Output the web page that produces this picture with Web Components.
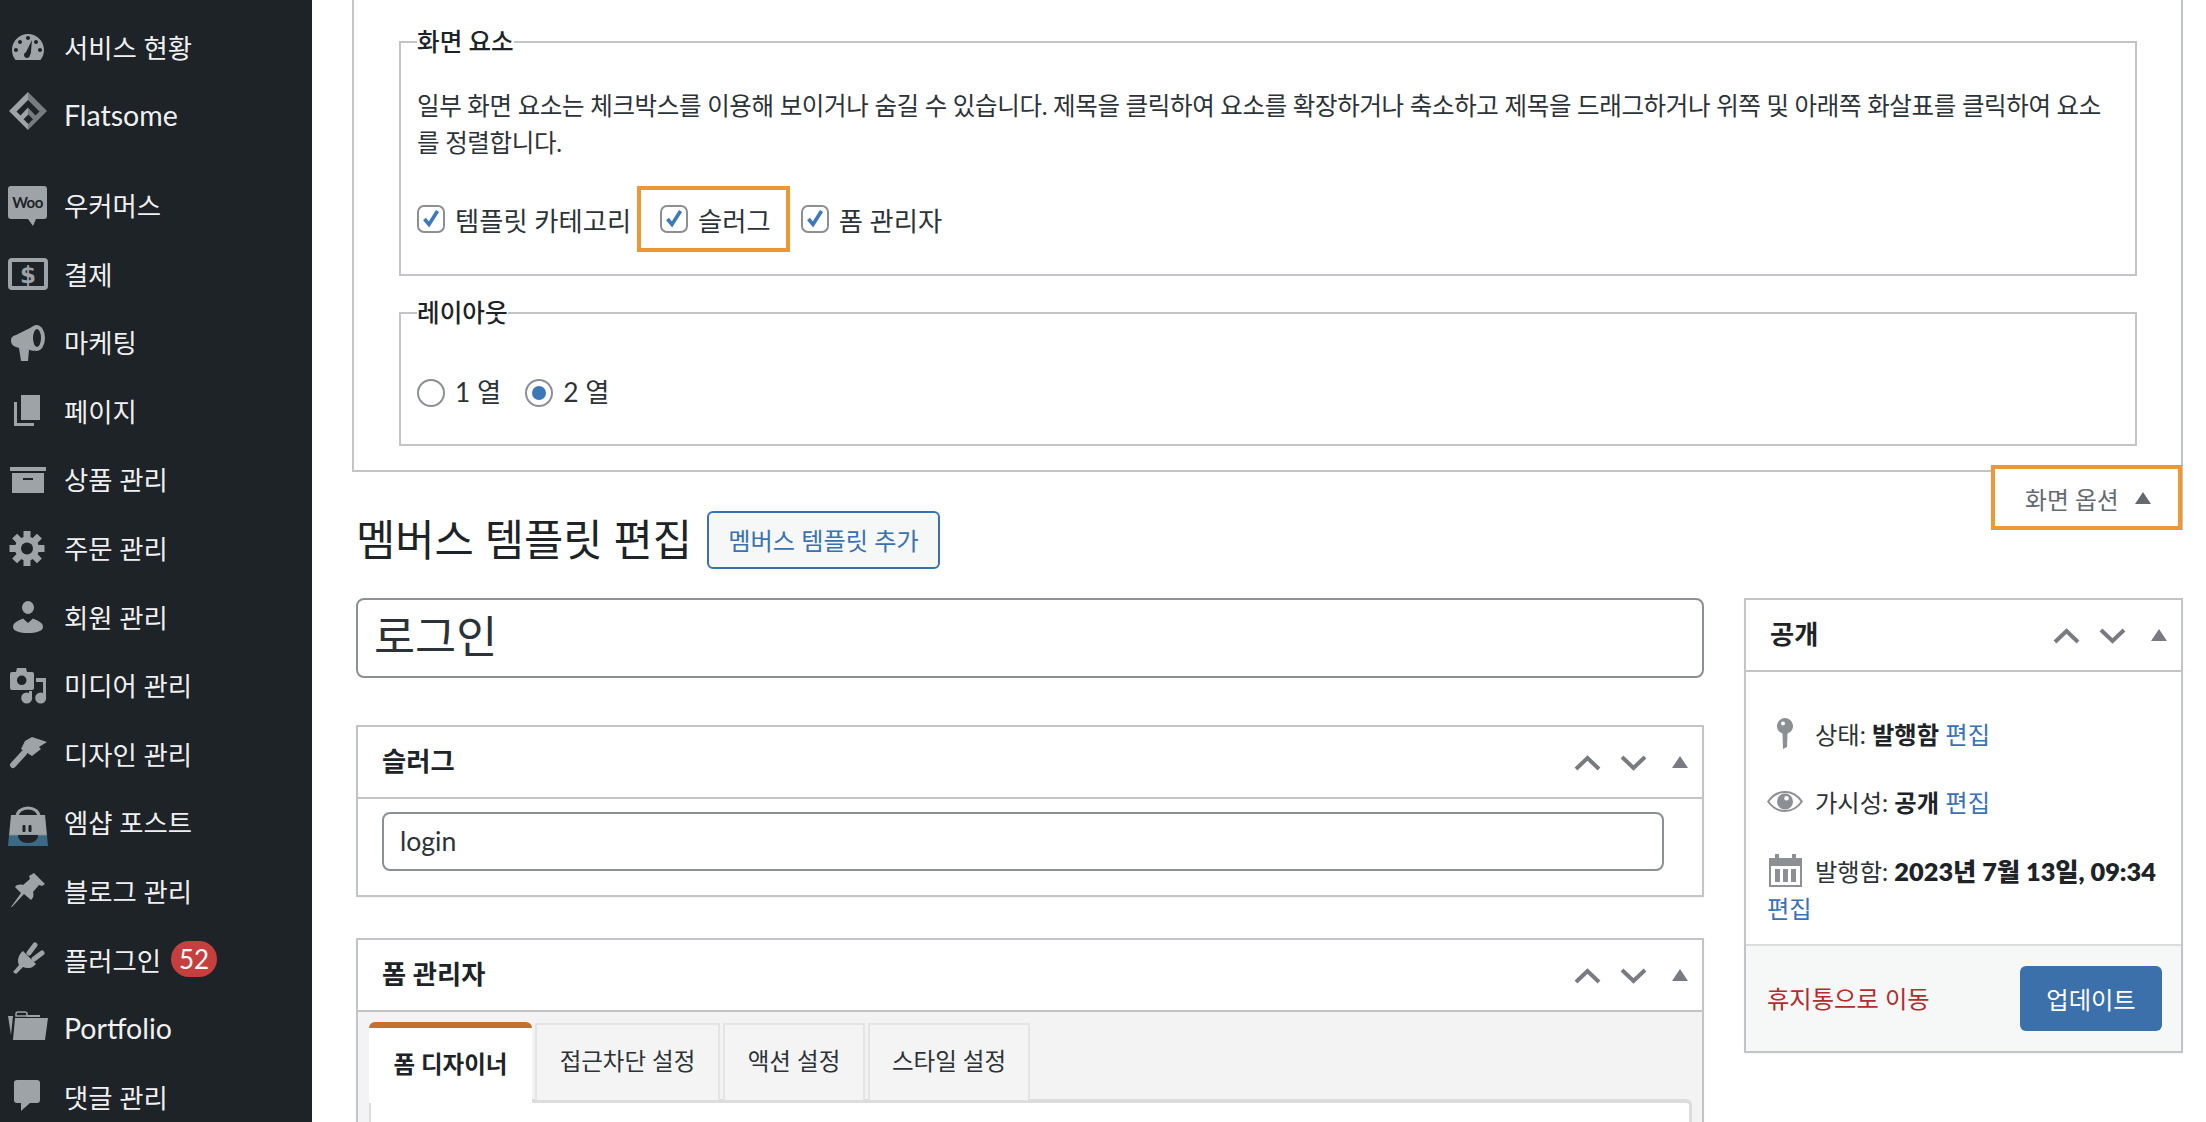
<!DOCTYPE html>
<html lang="ko">
<head>
<meta charset="utf-8">
<title>멤버스 템플릿 편집</title>
<style>
  html, body { margin: 0; height: 1122px; overflow: hidden; background: #fff; }
  body { display: flex; font-family: Lato, "Noto Sans CJK KR", sans-serif; color: #1d2327; }
</style>
</head>
<body>
<wp-sidebar>
  <wp-menu-item icon="dashboard">서비스 현황</wp-menu-item>
  <wp-menu-item icon="flatsome" latin>Flatsome</wp-menu-item>
  <wp-menu-item icon="woo" sep>우커머스</wp-menu-item>
  <wp-menu-item icon="payment">결제</wp-menu-item>
  <wp-menu-item icon="megaphone">마케팅</wp-menu-item>
  <wp-menu-item icon="pages">페이지</wp-menu-item>
  <wp-menu-item icon="archive">상품 관리</wp-menu-item>
  <wp-menu-item icon="gear">주문 관리</wp-menu-item>
  <wp-menu-item icon="user">회원 관리</wp-menu-item>
  <wp-menu-item icon="media">미디어 관리</wp-menu-item>
  <wp-menu-item icon="brush">디자인 관리</wp-menu-item>
  <wp-menu-item icon="mshop">엠샵 포스트</wp-menu-item>
  <wp-menu-item icon="pin">블로그 관리</wp-menu-item>
  <wp-menu-item icon="plugin" badge="52">플러그인</wp-menu-item>
  <wp-menu-item icon="folder" latin>Portfolio</wp-menu-item>
  <wp-menu-item icon="comment">댓글 관리</wp-menu-item>
</wp-sidebar>
<wp-main>
  <wp-screen-panel></wp-screen-panel>
  <wp-screen-tab></wp-screen-tab>
  <wp-title-row></wp-title-row>
  <wp-editor>
    <wp-title-input slot="left">로그인</wp-title-input>
    <wp-postbox slot="left" heading="슬러그" class="slug"><wp-slug-field>login</wp-slug-field></wp-postbox>
    <wp-postbox slot="left" heading="폼 관리자" class="form"><wp-tabs></wp-tabs></wp-postbox>
    <wp-postbox slot="right" heading="공개"><wp-publish></wp-publish></wp-postbox>
  </wp-editor>
</wp-main>

<script>
const ICONS = {
  dashboard: `<path transform="translate(0 2) scale(2)" fill-rule="evenodd" d="M3.76 16h12.48C17.33 14.63 18 12.9 18 11c0-4.42-3.58-8-8-8s-8 3.58-8 8c0 1.9.67 3.63 1.76 5zM10 4c.55 0 1 .45 1 1s-.45 1-1 1-1-.45-1-1 .45-1 1-1zM6 6c.55 0 1 .45 1 1s-.45 1-1 1-1-.45-1-1 .45-1 1-1zm8 0c.55 0 1 .45 1 1s-.45 1-1 1-1-.45-1-1 .45-1 1-1zM4 10c.55 0 1 .45 1 1s-.45 1-1 1-1-.45-1-1 .45-1 1-1zm12 0c.55 0 1 .45 1 1s-.45 1-1 1-1-.45-1-1 .45-1 1-1zm-5 3.5c0 .83-.67 1.5-1.5 1.5S8 14.33 8 13.5c0-.64.4-1.19.97-1.4L12 6l-.6 6.7c-.26.3-.4.6-.4.8z"/>`,
  flatsome: `<path d="M20-3 1 16l19 19z"/><path d="M20-3l19 19-19 19z" fill="#787c80"/>
    <path d="M20 5 8.5 16.5l4 4L20 12.6l7.500 7.900 4-4z" fill="#1d2327"/><path d="M20.300 19.600l4.700 4.700-4.700 4.700-4.700-4.700z" fill="#1d2327"/>`,
  woo: `<path d="M3 2h33a3 3 0 0 1 3 3v27a3 3 0 0 1-3 3H28l-3 7-5-7H3a3 3 0 0 1-3-3V5a3 3 0 0 1 3-3z"/>
    <text x="19.500" y="24" text-anchor="middle" font-family="Lato, sans-serif" font-weight="700" font-size="15" letter-spacing="-0.5" fill="#1d2327">Woo</text>`,
  payment: `<rect x="2" y="7" width="36" height="28" rx="2" fill="none" stroke="currentColor" stroke-width="4"/>
    <text x="20" y="29.500" text-anchor="middle" font-family="'DejaVu Sans', sans-serif" font-weight="700" font-size="23" fill="currentColor">$</text>`,
  megaphone: `<path d="M3 18c0-3 2-4 5-5L26 4v25l-9-2 4 1-1 11h-7l-2-13-3-1c-3-1-5-3-5-7z"/><ellipse cx="28.500" cy="16" rx="8.500" ry="13"/><ellipse cx="29" cy="16" rx="4" ry="9" fill="#1d2327"/>`,
  pages: `<path d="M13 5h19v25H13z"/><path d="M6 12h3v21h17v3H6z"/>`,
  archive: `<path d="M2 8h36v4H2z"/><path fill-rule="evenodd" d="M4 14h32v20H4zM15 19v2h10v-2z"/>`,
  gear: `<g stroke="currentColor" stroke-width="7"><path d="M19 4v35M1.500 21.500h35M6.600 9.100l24.800 24.800M31.400 9.100 6.600 33.900"/></g><circle cx="19" cy="21.500" r="12"/><circle cx="19" cy="21.500" r="6" fill="#1d2327"/>`,
  user: `<ellipse cx="20" cy="11.500" rx="6" ry="6.500"/><path d="M5 31c0-5 6-6.500 10-8.500l5 4.500 5-4.500c4 2 10 3.500 10 8.500 0 4-7 6-15 6S5 35 5 31z"/>`,
  media: `<path fill-rule="evenodd" d="M8 7l1-4h9l1 4h5a2 2 0 0 1 2 2v14a2 2 0 0 1-2 2H4a2 2 0 0 1-2-2V9a2 2 0 0 1 2-2zm5.700 3.500a4.800 4.800 0 1 0 0 9.600 4.800 4.800 0 0 0 0-9.600z"/>
    <path d="M28 13h10v20h-3V17h-7z"/><circle cx="32.700" cy="33" r="5.500"/><path d="M21 26h3v7h-3z"/><circle cx="18.700" cy="33" r="5.500"/>`,
  brush: `<path d="M17 8l7-4 15 5-8 5 2 2-9 7-11-7z"/><path d="M16 20 5 32" stroke="currentColor" stroke-width="6" stroke-linecap="round"/>`,
  mshop: `<defs><linearGradient id="ms" x1="0" y1="0" x2="0" y2="1"><stop offset=".62" stop-color="#9ea3a8"/><stop offset=".68" stop-color="#3c6a85"/></linearGradient></defs>
    <path d="M9 15c0-12 22-12 22 0" fill="none" stroke="#9ea3a8" stroke-width="3"/>
    <path d="M3 13h34l3 31H0z" fill="url(#ms)"/>
    <path d="M10 33h20c0 5-4 8-10 8s-10-3-10-8z" fill="#1d2327"/>
    <rect x="14.500" y="23" width="3" height="7" rx="1" fill="#1d2327"/><rect x="20.500" y="23" width="3" height="7" rx="1" fill="#1d2327"/>`,
  pin: `<path d="M26 3l11 11-3 2-3-1-6 7c1 3 .5 6-2 8l-7-6L4 37l-1 0 10-14-6-6c2-2.500 5-3 8-2l7-6-1-3z"/>`,
  plugin: `<path d="M15 12l13 13c-3.500 4.500-9 5-13 3l-7 7-3-2 6-7c-2-4-1-10 4-14z"/><path d="M21 14l6-8M26 20l8-6" stroke="currentColor" stroke-width="5" stroke-linecap="round"/>`,
  folder: `<path d="M7 10h33l-3 22H5z"/><path d="M8 8V6q0-2 2-2h7q2 0 2 2v2z" fill="none" stroke="currentColor" stroke-width="1.500"/><path d="M0 8h5L3 27z"/><path d="M19 7h13v2H19z"/>`,
  comment: `<path d="M9 4h20a3 3 0 0 1 3 3v17a3 3 0 0 1-3 3h-7l-9 8v-8H9a3 3 0 0 1-3-3V7a3 3 0 0 1 3-3z"/>`
};

class WpSidebar extends HTMLElement {
  constructor() {
    super();
    this.attachShadow({ mode: "open" }).innerHTML = `
      <style>
        :host { display: flex; flex-direction: column; flex: none; width: 312px; height: 1122px;
          padding-top: 12px; box-sizing: border-box; background: #1d2327; overflow: hidden; }
      </style>
      <slot></slot>`;
  }
}

class WpMenuItem extends HTMLElement {
  connectedCallback() {
    const badge = this.getAttribute("badge");
    this.attachShadow({ mode: "open" }).innerHTML = `
      <style>
        :host { display: flex; align-items: center; flex: none; height: 68.6px; color: #f0f0f1;
          font-size: 26.400px; white-space: nowrap; }
        :host([latin]) { font-size: 28.500px; }
        :host([sep]) { margin-top: 21px; }
        svg { width: 40px; height: 40px; margin: 0 16px 0 8px; flex: none; overflow: visible; fill: #9ea3a8; color: #9ea3a8; }
        b { font-weight: 400; font-size: 26px; margin-left: 10px; min-width: 46px; height: 36px; line-height: 36px; border-radius: 18px;
          background: #c63f3f; color: #fff; text-align: center; box-sizing: border-box; }
      </style>
      <svg viewBox="0 0 40 40">${ICONS[this.getAttribute("icon")]}</svg>
      <slot></slot>${badge ? `<b>${badge}</b>` : ""}`;
  }
}

class WpMain extends HTMLElement {
  constructor() {
    super();
    this.attachShadow({ mode: "open" }).innerHTML = `
      <style>
        :host { display: flex; flex-direction: column; flex: 1; min-width: 0; padding: 0 23px 0 40px; }
        ::slotted(*) { flex: none; }
      </style>
      <slot></slot>`;
  }
}

class WpFieldset extends HTMLElement {
  connectedCallback() {
    this.attachShadow({ mode: "open" }).innerHTML = `
      <style>
        :host { display: block; }
        fieldset { margin: 0; padding: 0 16px; border: 2px solid #c3c4c7; min-width: 0; }
        legend { padding: 0; margin: 0; line-height: 34px; font-size: 24.600px; font-weight: 500; color: #1d2327; }
      </style>
      <fieldset><legend>${this.getAttribute("legend")}</legend><slot></slot></fieldset>`;
  }
}

class WpCheck extends HTMLElement {
  constructor() {
    super();
    this.attachShadow({ mode: "open" }).innerHTML = `
      <style>
        :host { display: inline-flex; align-items: center; gap: 10px; height: 66px; box-sizing: border-box;
          font-size: 26.300px; color: #2c3338; white-space: nowrap; }
        :host([highlight]) { border: 4px solid #ee9735; padding: 0 15px 0 19px; }
        i { flex: none; width: 28px; height: 28px; box-sizing: border-box; border: 2px solid #8c8f94; border-radius: 7px; background: #fff; display: flex; }
        svg { width: 24px; height: 24px; }
      </style>
      <i><svg viewBox="0 0 24 24"><path d="M5.500 12l4.500 5.500L18.500 4" fill="none" stroke="#3c7abb" stroke-width="3.600"/></svg></i>
      <slot></slot>`;
  }
}

class WpRadio extends HTMLElement {
  constructor() {
    super();
    this.attachShadow({ mode: "open" }).innerHTML = `
      <style>
        :host { display: inline-flex; align-items: center; gap: 10px; height: 34px; font-size: 26.300px; color: #2c3338; white-space: nowrap; }
        span { margin-top: -5px; }
        i { flex: none; width: 28px; height: 28px; box-sizing: border-box; border: 2px solid #8c8f94; border-radius: 50%; background: #fff; display: flex; align-items: center; justify-content: center; }
        :host([checked]) i::after { content: ""; width: 14px; height: 14px; border-radius: 50%; background: #3c78b8; }
      </style>
      <i></i><span><slot></slot></span>`;
  }
}

class WpScreenPanel extends HTMLElement {
  constructor() {
    super();
    this.attachShadow({ mode: "open" }).innerHTML = `
      <style>
        :host { display: block; border: solid #c3c4c7; border-width: 0 2px 2px; padding: 25px 44px 24px 45px; }
        p { margin: 28px 0 25px; max-width: 1695px; font-size: 24.500px; line-height: 37px; color: #2c3338; letter-spacing: -0.34px; word-break: break-all; }
        .checks { display: flex; align-items: center; padding-bottom: 22px; }
        .checks wp-check:nth-child(1) { margin-right: 6px; }
        .checks wp-check:nth-child(2) { margin-right: 11px; }
        wp-fieldset + wp-fieldset { margin-top: 20px; }
        .radios { display: flex; gap: 24px; padding: 46px 0 34px; }
      </style>
      <wp-fieldset legend="화면 요소">
        <p>일부 화면 요소는 체크박스를 이용해 보이거나 숨길 수 있습니다. 제목을 클릭하여 요소를 확장하거나 축소하고 제목을 드래그하거나 위쪽 및 아래쪽 화살표를 클릭하여 요소를 정렬합니다.</p>
        <div class="checks">
          <wp-check>템플릿 카테고리</wp-check>
          <wp-check highlight>슬러그</wp-check>
          <wp-check>폼 관리자</wp-check>
        </div>
      </wp-fieldset>
      <wp-fieldset legend="레이아웃">
        <div class="radios">
          <wp-radio>1 열</wp-radio>
          <wp-radio checked>2 열</wp-radio>
        </div>
      </wp-fieldset>`;
  }
}

class WpScreenTab extends HTMLElement {
  constructor() {
    super();
    this.attachShadow({ mode: "open" }).innerHTML = `
      <style>
        :host { display: flex; align-items: center; align-self: flex-end; position: relative; box-sizing: border-box;
          width: 191px; height: 65px; margin: -7px 1px -19px 0; padding-left: 30px; border: 4px solid #ee9735; background: #fff;
          font-size: 23.800px; color: #646970; white-space: nowrap; box-shadow: 1px 0 0 #c3c4c7; }
        span { margin-top: 2px; }
        i { margin-left: 16px; width: 0; height: 0; border: 8px solid transparent; border-top: 0; border-bottom: 12px solid #646970; }
      </style>
      <span>화면 옵션</span><i></i>`;
  }
}

class WpTitleRow extends HTMLElement {
  constructor() {
    super();
    this.attachShadow({ mode: "open" }).innerHTML = `
      <style>
        :host { display: flex; align-items: center; gap: 15px; height: 58px; padding-left: 4px; }
        h1 { margin: 0 0 7px; font-size: 42.700px; font-weight: 400; color: #1d2327; white-space: nowrap; }
        a { display: flex; align-items: center; justify-content: center; box-sizing: border-box; width: 233px; height: 58px; padding-bottom: 2px;
          border: 2px solid #3a72ad; border-radius: 6px; background: #f6f7f7; color: #3a72ad; font-size: 24.200px; white-space: nowrap; }
      </style>
      <h1>멤버스 템플릿 편집</h1><a>멤버스 템플릿 추가</a>`;
  }
}

class WpEditor extends HTMLElement {
  constructor() {
    super();
    this.attachShadow({ mode: "open" }).innerHTML = `
      <style>
        :host { display: grid; grid-template-columns: 1fr 439px; gap: 40px; margin: 29px 0 0 4px; align-items: start; }
        div { display: flex; flex-direction: column; min-width: 0; }
        ::slotted(.slug) { margin-top: 47px; }
        ::slotted(.form) { margin-top: 41px; }
      </style>
      <div><slot name="left"></slot></div>
      <div><slot name="right"></slot></div>`;
  }
}

class WpTitleInput extends HTMLElement {
  constructor() {
    super();
    this.attachShadow({ mode: "open" }).innerHTML = `
      <style>
        :host { display: flex; align-items: center; box-sizing: border-box; height: 80px; padding: 0 16px 10px;
          border: 2px solid #8c8f94; border-radius: 8px; background: #fff; font-size: 44.700px; color: #2c3338; }
      </style>
      <slot></slot>`;
  }
}

class WpHandles extends HTMLElement {
  constructor() {
    super();
    this.attachShadow({ mode: "open" }).innerHTML = `
      <style>
        :host { display: flex; align-items: center; gap: 19px; color: #787c82; }
        svg { width: 27px; height: 16px; margin-top: 2px; }
        i { margin-left: 6px; width: 0; height: 0; border: 8px solid transparent; border-top: 0; border-bottom: 12px solid #787c82; }
      </style>
      <svg viewBox="0 0 27 16"><path d="M2 14 13.500 3 25 14" fill="none" stroke="currentColor" stroke-width="4"/></svg>
      <svg viewBox="0 0 27 16"><path d="M2 2l11.500 11L25 2" fill="none" stroke="currentColor" stroke-width="4"/></svg>
      <i></i>`;
  }
}

class WpPostbox extends HTMLElement {
  connectedCallback() {
    this.attachShadow({ mode: "open" }).innerHTML = `
      <style>
        :host { display: block; box-sizing: border-box; border: 2px solid #c3c4c7; background: #fff; box-shadow: 0 1px 2px rgba(0,0,0,.05); }
        header { display: flex; align-items: center; justify-content: space-between; box-sizing: border-box; height: 72px;
          padding: 0 14px 0 24px; border-bottom: 2px solid #c3c4c7; }
        h2 { margin: 0 0 6px; font-size: 26.300px; font-weight: 600; color: #1d2327; white-space: nowrap; }
      </style>
      <header><h2>${this.getAttribute("heading")}</h2><wp-handles></wp-handles></header>
      <slot></slot>`;
  }
}

class WpSlugField extends HTMLElement {
  constructor() {
    super();
    this.attachShadow({ mode: "open" }).innerHTML = `
      <style>
        :host { display: block; padding: 13px 38px 24px 24px; }
        div { display: flex; align-items: center; box-sizing: border-box; height: 59px; padding: 0 16px 2px;
          border: 2px solid #8c8f94; border-radius: 8px; font-size: 26.600px; color: #2c3338; }
      </style>
      <div><slot></slot></div>`;
  }
}

class WpTabs extends HTMLElement {
  constructor() {
    super();
    this.attachShadow({ mode: "open" }).innerHTML = `
      <style>
        :host { display: block; background: #f3f3f3; padding: 10px 10px 0 11px; height: 120px; box-sizing: border-box; }
        nav { display: flex; gap: 3px; position: relative; z-index: 1; font-size: 23.500px; color: #2c3338; white-space: nowrap; }
        span { display: flex; align-items: center; justify-content: center; box-sizing: border-box; height: 77px; margin-top: 1px; padding-bottom: 6px;
          border: solid #e4e4e4; border-width: 2px 2px 0; background: #f4f4f4; }
        span.on { height: 81px; margin-top: 0; border: 0; border-top: 6px solid #c4702f; border-radius: 6px 6px 0 0; background: #fff; font-weight: 700; color: #1d2327; }
        div { height: 40px; margin-top: -4px; border: solid #dcdcdc; border-width: 4px 3px 0 2px; border-top-right-radius: 6px; background: #fff; }
      </style>
      <nav>
        <span class="on" style="width:163px">폼 디자이너</span>
        <span style="width:185px">접근차단 설정</span>
        <span style="width:142px">액션 설정</span>
        <span style="width:162px">스타일 설정</span>
      </nav>
      <div></div>`;
  }
}

class WpPublish extends HTMLElement {
  constructor() {
    super();
    this.attachShadow({ mode: "open" }).innerHTML = `
      <style>
        :host { display: block; font-size: 24.300px; color: #2c3338; }
        .misc { padding: 42px 0 17px 21px; }
        .row { display: flex; align-items: center; height: 38px; white-space: nowrap; }
        .row + .row { margin-top: 30px; }
        .row:nth-child(3) { margin-top: 31px; }
        .ic { flex: none; width: 36px; margin-right: 12px; display: flex; justify-content: center; overflow: visible; }
        b { font-weight: 700; color: #1d2327; }
        b.date { font-size: 25.300px; font-weight: 800; }
        a { color: #3a72b5; }
        .edit { display: block; line-height: 38px; margin-top: 1px; margin-bottom: -1px; }
        footer { display: flex; align-items: center; justify-content: space-between; height: 105px; padding: 0 19px 0 21px;
          border-top: 2px solid #dcdcde; background: #f6f7f7; }
        footer a { color: #b32d2e; margin-bottom: 3px; }
        button { width: 142px; height: 65px; border: 0; border-radius: 6px; background: #3b70ab; color: #fff; font: inherit; }
      </style>
      <div class="misc">
        <div class="row"><span class="ic"><svg width="16" height="31" viewBox="0 0 16 31" fill="#8c8f94"><path fill-rule="evenodd" d="M8 0a8 8 0 0 1 2.500 15.600L10 29l-4 2-.5-15.400A8 8 0 0 1 8 0zM6 3.500a2 2 0 1 0 0 4 2 2 0 0 0 0-4z"/></svg></span><span>상태: <b>발행함</b> <a>편집</a></span></div>
        <div class="row"><span class="ic"><svg width="36" height="21" viewBox="0 0 36 21"><path d="M1.200 10.500C5 5 11 1 18 1s13 4 16.800 9.500C31 16 25 20 18 20S5 16 1.200 10.500z" fill="none" stroke="#8c8f94" stroke-width="2"/><path fill="#8c8f94" fill-rule="evenodd" d="M18 2.500a8 8 0 1 1 0 16 8 8 0 0 1 0-16zM19.500 5a2.300 2.300 0 1 0 0 4.600 2.300 2.300 0 0 0 0-4.600z"/></svg></span><span>가시성: <b>공개</b> <a>편집</a></span></div>
        <div class="row"><span class="ic"><svg width="33" height="33" viewBox="0 0 33 33" fill="#8c8f94"><path fill-rule="evenodd" d="M0 4h6V1a2 2 0 0 1 4 0v3h13V1a2 2 0 0 1 4 0v3h6v29H0zM2 12v19h29V12zM6 15h5v13H6zM14 15h5v13h-5zM22 15h5v13h-5z"/></svg></span><span>발행함: <b class="date">2023년 7월 13일, 09:34</b></span></div>
        <a class="edit">편집</a>
      </div>
      <footer><a>휴지통으로 이동</a><button>업데이트</button></footer>`;
  }
}

customElements.define("wp-sidebar", WpSidebar);
customElements.define("wp-menu-item", WpMenuItem);
customElements.define("wp-main", WpMain);
customElements.define("wp-fieldset", WpFieldset);
customElements.define("wp-check", WpCheck);
customElements.define("wp-radio", WpRadio);
customElements.define("wp-screen-panel", WpScreenPanel);
customElements.define("wp-screen-tab", WpScreenTab);
customElements.define("wp-title-row", WpTitleRow);
customElements.define("wp-editor", WpEditor);
customElements.define("wp-title-input", WpTitleInput);
customElements.define("wp-handles", WpHandles);
customElements.define("wp-postbox", WpPostbox);
customElements.define("wp-slug-field", WpSlugField);
customElements.define("wp-tabs", WpTabs);
customElements.define("wp-publish", WpPublish);
</script>
</body>
</html>
